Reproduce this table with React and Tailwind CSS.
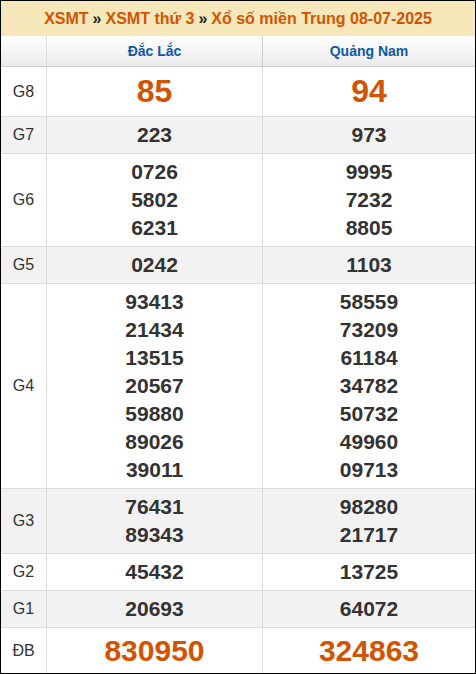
import React from 'react'

const rows = [
  { label: 'G8', a: ['85'], b: ['94'], big: 'g8' },
  { label: 'G7', a: ['223'], b: ['973'], gray: true },
  { label: 'G6', a: ['0726', '5802', '6231'], b: ['9995', '7232', '8805'] },
  { label: 'G5', a: ['0242'], b: ['1103'], gray: true },
  {
    label: 'G4',
    a: ['93413', '21434', '13515', '20567', '59880', '89026', '39011'],
    b: ['58559', '73209', '61184', '34782', '50732', '49960', '09713'],
  },
  { label: 'G3', a: ['76431', '89343'], b: ['98280', '21717'], gray: true },
  { label: 'G2', a: ['45432'], b: ['13725'] },
  { label: 'G1', a: ['20693'], b: ['64072'], gray: true },
  { label: 'ĐB', a: ['830950'], b: ['324863'], big: 'db', last: true },
]

const NumCell = ({ nums, big, right }) => {
  let cls = 'text-[21px] leading-[28px] text-[#333]'
  if (big === 'g8') cls = 'text-[32px] leading-[41px] text-[#d35400]'
  if (big === 'db') cls = 'text-[30px] leading-[37px] text-[#d35400]'
  return (
    <div className={`flex flex-col items-center justify-center py-1 font-bold ${right ? '' : 'border-r border-[#ddd]'}`}>
      {nums.map((n) => (
        <div key={n} className={cls}>{n}</div>
      ))}
    </div>
  )
}

const App = () => {
  return (
    <div className="w-[476px] border border-black font-['Liberation_Sans',Arial,sans-serif]">
      {/* title */}
      <div className="h-[35px] bg-[#f6e8bb] flex items-center justify-center text-[16px] font-bold text-[#d35400]">
        <span>XSMT</span>
        <span className="text-[#222] mx-[4px]">»</span>
        <span>XSMT thứ 3</span>
        <span className="text-[#222] mx-[4px]">»</span>
        <span>Xổ số miền Trung 08-07-2025</span>
      </div>

      {/* header */}
      <div className="grid grid-cols-[46px_216px_212px] h-[31px] border-b border-[#ccc] bg-gradient-to-b from-white to-[#ebebeb]">
        <div className="border-r border-[#ddd]"></div>
        <div className="border-r border-[#ccc] flex items-center justify-center text-[14px] font-bold text-[#0d5aa7]">Đắc Lắc</div>
        <div className="flex items-center justify-center text-[14px] font-bold text-[#0d5aa7]">Quảng Nam</div>
      </div>

      {rows.map((r) => (
        <div
          key={r.label}
          className={`grid grid-cols-[46px_216px_212px] ${r.gray ? 'bg-[#f2f2f2]' : 'bg-white'} ${r.last ? '' : 'border-b border-[#ddd]'}`}
        >
          <div className="border-r border-[#ddd] flex items-center justify-center text-[16px] text-[#333]">{r.label}</div>
          <NumCell nums={r.a} big={r.big} />
          <NumCell nums={r.b} big={r.big} right />
        </div>
      ))}
    </div>
  )
}

export default App
